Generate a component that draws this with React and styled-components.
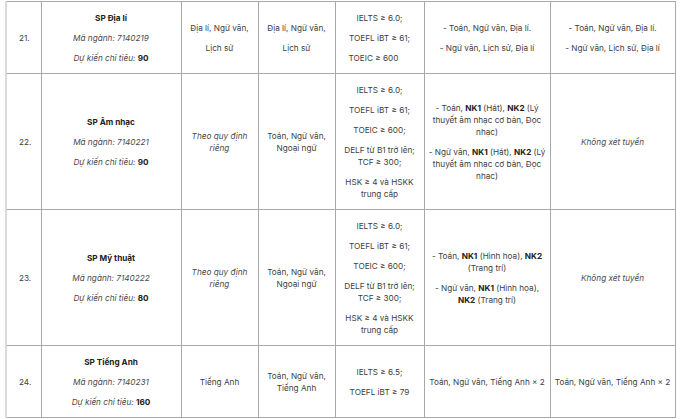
import React from 'react'
import styled, {createGlobalStyle} from 'styled-components'

const GlobalStyle = createGlobalStyle`
  html, body {
    margin: 0;
    padding: 0;
    background: #fff;
  }
  body {
    font-family: Inter, "Noto Sans", "Liberation Sans", sans-serif;
    color: #404040;
    overflow: hidden;
  }
`

const Page = styled.div`
  width: 680px;
  height: 419px;
  overflow: hidden;
  padding: 1px 0 0 5px;
  box-sizing: border-box;
`

const Table = styled.table`
  width: 669px;
  table-layout: fixed;
  border-collapse: collapse;
  border-left: 2px solid #dadada;
  font-size: 8.2px;
  line-height: 12px;
`

const Cell = styled.td`
  border: 1px solid #a9a9a9;
  padding: 9.5px ${p => (p.$num ? '12px' : '4px')};
  text-align: ${p => (p.$num ? 'left' : 'center')};
  vertical-align: middle;
  white-space: nowrap;
  &:first-child {
    border-left: 2px solid #dadada;
  }
`

const Para = styled.p`
  margin: 0;
  text-align: ${p => (p.$left ? 'left' : 'center')};
  padding-left: ${p => (p.$left ? '9px' : '0')};
  & + & {
    margin-top: 8px;
  }
`

const Title = styled(Para)`
  font-weight: 700;
  color: #222;
`

const Note = styled.span`
  font-style: italic;
  color: #4a4a4a;
`

const B = styled.b`
  font-weight: 700;
  color: #222;
`

const widths = [35, 140, 77, 77, 89, 126, 125]

const Major = ({name, code, quota}) => (
  <>
    <Title>{name}</Title>
    <Para><Note>Mã ngành: {code}</Note></Para>
    <Para><Note>Dự kiến chỉ tiêu:</Note> <B>{quota}</B></Para>
  </>
)

const LangList = () => (
  <>
    <Para>IELTS ≥ 6.0;</Para>
    <Para>TOEFL iBT ≥ 61;</Para>
    <Para>TOEIC ≥ 600;</Para>
    <Para>DELF từ B1 trở lên;<br />TCF ≥ 300;</Para>
    <Para>HSK ≥ 4 và HSKK<br />trung cấp</Para>
  </>
)

export default function App() {
  return (
    <Page>
      <GlobalStyle />
      <Table>
        <colgroup>
          {widths.map((w, i) => <col key={i} style={{width: w}} />)}
        </colgroup>
        <tbody>
          <tr>
            <Cell $num>21.</Cell>
            <Cell><Major name="SP Địa lí" code="7140219" quota="90" /></Cell>
            <Cell><Para>Địa lí, Ngữ văn,</Para><Para>Lịch sử</Para></Cell>
            <Cell><Para>Địa lí, Ngữ văn,</Para><Para>Lịch sử</Para></Cell>
            <Cell>
              <Para>IELTS ≥ 6.0;</Para>
              <Para>TOEFL iBT ≥ 61;</Para>
              <Para $left>TOEIC ≥ 600</Para>
            </Cell>
            <Cell><Para>- Toán, Ngữ văn, Địa lí.</Para><Para>- Ngữ văn, Lịch sử, Địa lí</Para></Cell>
            <Cell><Para>- Toán, Ngữ văn, Địa lí.</Para><Para>- Ngữ văn, Lịch sử, Địa lí</Para></Cell>
          </tr>
          <tr>
            <Cell $num>22.</Cell>
            <Cell><Major name="SP Âm nhạc" code="7140221" quota="90" /></Cell>
            <Cell><Para><Note>Theo quy định<br />riêng</Note></Para></Cell>
            <Cell><Para>Toán, Ngữ văn,<br />Ngoại ngữ</Para></Cell>
            <Cell><LangList /></Cell>
            <Cell>
              <Para>- Toán, <B>NK1</B> (Hát), <B>NK2</B> (Lý<br />thuyết âm nhạc cơ bản, Đọc<br />nhạc)</Para>
              <Para>- Ngữ văn, <B>NK1</B> (Hát), <B>NK2</B> (Lý<br />thuyết âm nhạc cơ bản, Đọc<br />nhạc)</Para>
            </Cell>
            <Cell><Para><Note>Không xét tuyển</Note></Para></Cell>
          </tr>
          <tr>
            <Cell $num>23.</Cell>
            <Cell><Major name="SP Mỹ thuật" code="7140222" quota="80" /></Cell>
            <Cell><Para><Note>Theo quy định<br />riêng</Note></Para></Cell>
            <Cell><Para>Toán, Ngữ văn,<br />Ngoại ngữ</Para></Cell>
            <Cell><LangList /></Cell>
            <Cell>
              <Para>- Toán, <B>NK1</B> (Hình họa), <B>NK2</B><br />(Trang trí)</Para>
              <Para>- Ngữ văn, <B>NK1</B> (Hình họa),<br /><B>NK2</B> (Trang trí)</Para>
            </Cell>
            <Cell><Para><Note>Không xét tuyển</Note></Para></Cell>
          </tr>
          <tr>
            <Cell $num>24.</Cell>
            <Cell><Major name="SP Tiếng Anh" code="7140231" quota="160" /></Cell>
            <Cell><Para>Tiếng Anh</Para></Cell>
            <Cell><Para>Toán, Ngữ văn,<br />Tiếng Anh</Para></Cell>
            <Cell><Para>IELTS ≥ 6.5;</Para><Para>TOEFL iBT ≥ 79</Para></Cell>
            <Cell><Para>Toán, Ngữ văn, Tiếng Anh × 2</Para></Cell>
            <Cell><Para>Toán, Ngữ văn, Tiếng Anh × 2</Para></Cell>
          </tr>
        </tbody>
      </Table>
    </Page>
  )
}
